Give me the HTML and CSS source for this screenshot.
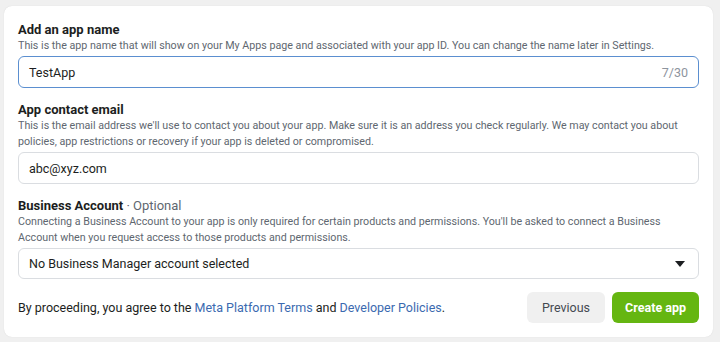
FILE: index.html
```html
<!DOCTYPE html>
<html lang="en">
<head>
    <meta charset="UTF-8">
    <meta name="viewport" content="width=device-width, initial-scale=1.0">
    <title>Create an app</title>
    <link rel="stylesheet" href="styles.css">
</head>
<body>

    <!-- App details card -->
    <div class="card">

        <div class="field">
            <h3>Add an app name</h3>
            <p class="hint">This is the app name that will show on your My Apps page and associated with your app ID. You can change the name later in Settings.</p>
            <div class="input focused">
                <span class="value">TestApp</span>
                <span class="counter">7/30</span>
            </div>
        </div>

        <div class="field">
            <h3>App contact email</h3>
            <p class="hint">This is the email address we'll use to contact you about your app. Make sure it is an address you check regularly. We may contact you about policies, app restrictions or recovery if your app is deleted or compromised.</p>
            <div class="input">
                <span class="value">abc@xyz.com</span>
            </div>
        </div>

        <div class="field">
            <h3>Business Account <span class="optional">· Optional</span></h3>
            <p class="hint">Connecting a Business Account to your app is only required for certain products and permissions. You'll be asked to connect a Business Account when you request access to those products and permissions.</p>
            <div class="input select">
                <span class="value">No Business Manager account selected</span>
                <span class="caret"></span>
            </div>
        </div>

        <!-- Footer -->
        <div class="footer">
            <p class="terms">By proceeding, you agree to the <a href="#">Meta Platform Terms</a> and <a href="#">Developer Policies</a>.</p>
            <div class="actions">
                <button class="btn btn-secondary">Previous</button>
                <button class="btn btn-primary">Create app</button>
            </div>
        </div>

    </div>

</body>
</html>
```

FILE: styles.css
```css
/* General Reset */
* {
    margin: 0;
    padding: 0;
    box-sizing: border-box;
}

body {
    font-family: Roboto, 'Liberation Sans', sans-serif;
    background-color: #f0f0f0;
    color: #1c1e21;
    padding: 6px 7px 5px 4px;
}

/* Card */
.card {
    background-color: #ffffff;
    border-radius: 8px;
    padding: 16px 14px 14px 14px;
    box-shadow: 0 0 1px rgba(0, 0, 0, 0.15);
}

.field + .field {
    margin-top: 14px;
}

.field h3 {
    font-size: 13px;
    line-height: 16px;
    font-weight: bold;
    color: #1c1e21;
}

.field h3 .optional {
    font-weight: normal;
    color: #606770;
}

.hint {
    font-size: 10.7px;
    line-height: 16px;
    color: #606770;
}

/* Inputs */
.input {
    margin-top: 2px;
    height: 32px;
    border: 1px solid #dadde1;
    border-radius: 6px;
    padding: 0 10px;
    display: flex;
    align-items: center;
    justify-content: space-between;
    font-size: 12.5px;
}

.input.focused {
    border-color: #5b8fd0;
}

.input .counter {
    color: #8d949e;
}

.input.select {
    height: 31px;
}

.select .caret {
    width: 0;
    height: 0;
    border-left: 5px solid transparent;
    border-right: 5px solid transparent;
    border-top: 6px solid #1c1e21;
    margin-right: 3px;
}

/* Footer */
.footer {
    margin-top: 13px;
    display: flex;
    align-items: center;
    justify-content: space-between;
}

.terms {
    font-size: 12.5px;
    color: #1c1e21;
}

.terms a {
    color: #3b6ab0;
    text-decoration: none;
}

.actions {
    display: flex;
    gap: 7px;
}

.btn {
    height: 31px;
    border: none;
    border-radius: 6px;
    padding: 0 13px;
    font-family: Roboto, 'Liberation Sans', sans-serif;
    font-size: 12.5px;
}

.btn-secondary {
    padding: 0 15px;
    background-color: #f0f0f0;
    color: #444950;
}

.btn-primary {
    background-color: #65b611;
    color: #ffffff;
    font-weight: bold;
}
```
